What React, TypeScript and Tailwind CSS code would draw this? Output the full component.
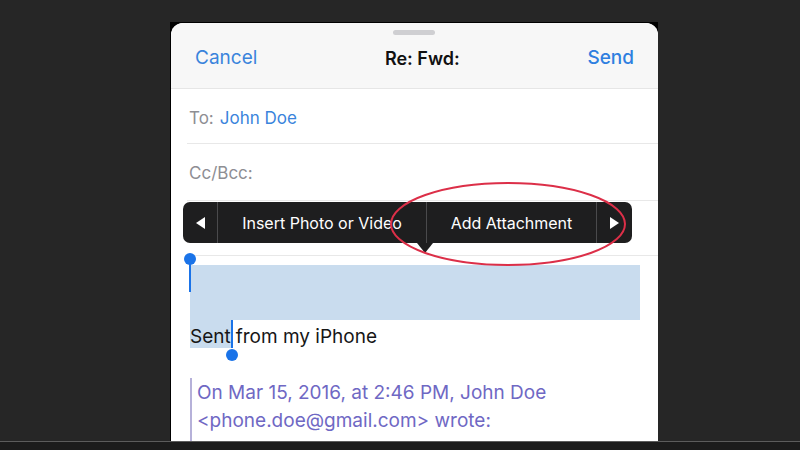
import { useState } from "react";

const font = { fontFamily: "Inter, 'Liberation Sans', sans-serif" };

function Handle({ className }: { className: string }) {
  return <span className={`absolute w-[12px] h-[12px] rounded-full bg-[#1a73e8] ${className}`} />;
}

export default function App() {
  const [to] = useState("John Doe");

  return (
    <div className="w-[800px] h-[450px] bg-[#262626] flex flex-col overflow-hidden" style={font}>
      <div className="h-[441px] pt-[22px] pl-[170px]">
        <div className="w-[488px] h-full bg-black pt-[1px] pl-[1px]">
          <section className="relative w-[487px] h-full bg-white rounded-t-[12px] overflow-hidden">
            {/* header */}
            <header className="relative h-[66px] bg-[#f7f7f7] border-b border-[#e6e6e6] flex items-center justify-between pl-[24px] pr-[24px] pt-[6px]">
              <span className="absolute top-[7px] left-[222px] w-[42px] h-[5px] rounded-full bg-[#cfcfd2]" />
              <button className="text-[19px] text-[#3a84dc]">Cancel</button>
              <h1 className="text-[18px] font-semibold text-[#111]">Re: Fwd:</h1>
              <button className="text-[19px] font-medium text-[#2f7fe0]">Send</button>
            </header>

            {/* fields */}
            <div className="ml-[16px]">
              <div className="h-[55px] border-b border-[#e8e8e8] flex items-center pl-[2px] pt-[5px] text-[17px]">
                <span className="text-[#8e8e93]">To:</span>
                <span className="ml-[6px] text-[#3a84dc]">{to}</span>
              </div>
              <div className="h-[57px] border-b border-[#e8e8e8] flex items-center pl-[2px] pt-[4px] text-[17px] text-[#8e8e93]">
                Cc/Bcc:
              </div>
              <div className="h-[55px] border-b border-[#e8e8e8]" />
            </div>

            {/* body */}
            <div className="relative pl-[19px] pr-[18px] pt-[9px]">
              <div className="h-[55px] bg-[#c9dcee]" />
              <p className="h-[28px] flex text-[19px] text-[#161616]">
                <span className="bg-[#c9dcee] flex items-center pt-[6px]">Sent</span>
                <span className="w-[2px] bg-[#1a73e8]" />
                <span className="ml-[3px] flex items-center pt-[6px]">from my iPhone</span>
              </p>
              <span className="absolute left-[18px] top-[2px] w-[2px] h-[34px] bg-[#1a73e8]" />
              <Handle className="left-[13px] top-[-3px]" />
              <Handle className="left-[55px] top-[93px]" />

              <blockquote className="mt-[30px] border-l-2 border-[#b6b1d9] pl-[5px] pt-[1px] pb-[8px] text-[19px] leading-[28px] text-[#6f68c4]">
                <div>On Mar 15, 2016, at 2:46 PM, John Doe</div>
                <div>&lt;phone.doe@gmail.com&gt; wrote:</div>
              </blockquote>
            </div>

            {/* edit menu */}
            <div className="absolute left-[12px] top-[179px] w-[449px] h-[41px] bg-[#1e1e1f] rounded-[7px] flex text-white text-[16px]">
              <div className="w-[35px] flex items-center justify-center border-r border-[#4a4a4c]">
                <svg width="9" height="12" viewBox="0 0 9 12"><path d="M9 0 L0 6 L9 12 Z" fill="#fff" /></svg>
              </div>
              <div className="w-[209px] flex items-center justify-center border-r border-[#4a4a4c]">Insert Photo or Video</div>
              <div className="w-[170px] flex items-center justify-center border-r border-[#4a4a4c]">Add Attachment</div>
              <div className="flex-1 flex items-center justify-center">
                <svg width="9" height="12" viewBox="0 0 9 12"><path d="M0 0 L9 6 L0 12 Z" fill="#fff" /></svg>
              </div>
              <span className="absolute left-[234px] top-[41px] w-0 h-0 border-l-[8px] border-r-[8px] border-t-[10px] border-l-transparent border-r-transparent border-t-[#1e1e1f]" />
            </div>

            {/* red annotation */}
            <svg className="absolute left-0 top-0 pointer-events-none" width="487" height="420">
              <ellipse cx="337" cy="201" rx="117" ry="41" fill="none" stroke="#dc2f48" strokeWidth="2" />
            </svg>
          </section>
        </div>
      </div>
      <div className="flex-1 border-t border-[#5c5c5c] bg-[#1c1c1c]" />
    </div>
  );
}
